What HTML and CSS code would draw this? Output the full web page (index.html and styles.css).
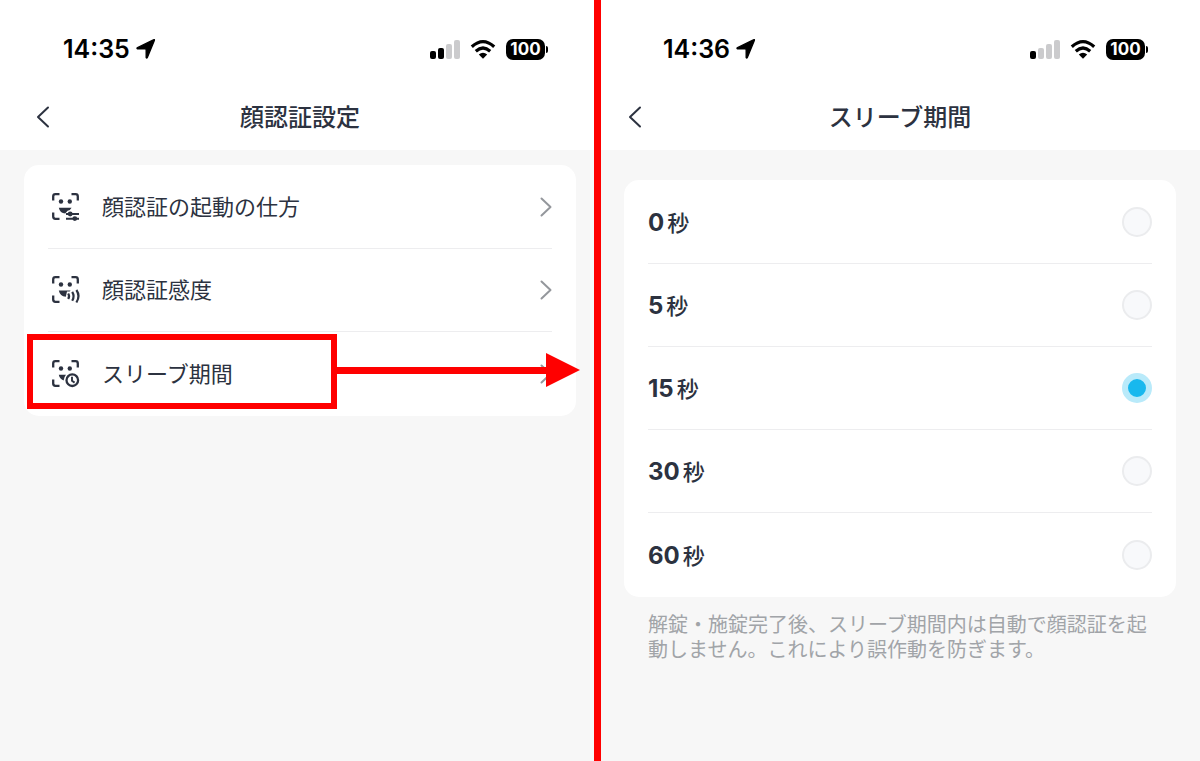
FILE: index.html
```html
<!DOCTYPE html>
<html lang="ja">
<head>
    <meta charset="UTF-8">
    <meta name="viewport" content="width=device-width, initial-scale=1.0">
    <title>顔認証設定</title>
    <link rel="stylesheet" href="styles.css">
</head>
<body>

    <!-- Shared icons -->
    <svg class="sprite" aria-hidden="true">
        <symbol id="location" viewBox="0 0 20 20">
            <path d="M18.3 1.4 L11.3 18.4 Q10.7 19.6 10.2 18.4 V10.6 Q10 10 9.4 9.8 H1.6 Q.4 9.3 1.6 8.7 L17.4 .9 Q18.7 .2 18.3 1.4Z" stroke="#000" stroke-width="1.4" stroke-linejoin="round"/>
        </symbol>
        <symbol id="wifi" viewBox="0 0 26 19">
            <path d="M1.8 6.8 Q13 -3.4 24.2 6.8 M5.8 11.2 Q13 4.8 20.2 11.2" fill="none" stroke="#000" stroke-width="3.2"/>
            <path d="M13 18.8 L8.8 14.6 Q13 11 17.2 14.6Z"/>
        </symbol>
        <symbol id="back" viewBox="0 0 14 22">
            <path d="M12 1.5 L2 11 L12 20.5" fill="none" stroke="#2c3240" stroke-width="2" stroke-linecap="round" stroke-linejoin="round"/>
        </symbol>
        <symbol id="next" viewBox="0 0 12 20">
            <path d="M1.5 1.5 L10.5 10 L1.5 18.5" fill="none" stroke="#94979c" stroke-width="2" stroke-linecap="round" stroke-linejoin="round"/>
        </symbol>
        <symbol id="face" viewBox="0 0 28 28">
            <path d="M1.2 7.5 V3.4 Q1.2 1.2 3.4 1.2 H7.5 M19.5 1.2 H23.6 Q25.8 1.2 25.8 3.4 V7.5 M1.2 19.5 V23.6 Q1.2 25.8 3.4 25.8 H7.5" fill="none" stroke="#2c3240" stroke-width="2.3"/>
            <circle cx="9" cy="8.5" r="2.2"/>
            <circle cx="17.8" cy="8.5" r="2.2"/>
        </symbol>
    </svg>

    <main class="screens">
        <section class="screen">
            <header class="header">
                <div class="status">
                    <span class="time">14:35</span>
                    <svg class="location"><use href="#location"/></svg>
                    <div class="indicators">
                        <div class="signal">
                            <i class="on"></i><i class="on"></i><i></i><i></i>
                        </div>
                        <svg class="wifi"><use href="#wifi"/></svg>
                        <div class="battery">100</div>
                    </div>
                </div>
                <div class="nav">
                    <button class="back" aria-label="戻る"><svg><use href="#back"/></svg></button>
                    <h1>顔認証設定</h1>
                </div>
            </header>

            <nav class="card">
                <a class="row" href="#">
                    <svg class="icon" viewBox="0 0 28 28">
                        <use href="#face"/>
                        <path d="M6.8 14.8 H19.6 Q18.4 17.4 15.6 17.8 L13.2 20.6 Q8 20.2 6.8 14.8Z"/>
                        <path d="M14 21 H27 M14 25.8 H27" stroke="#2c3240" stroke-width="2"/>
                        <circle cx="18.2" cy="21" r="2.4"/>
                        <circle cx="22.8" cy="25.6" r="2.4"/>
                    </svg>
                    <span>顔認証の起動の仕方</span>
                    <svg class="next"><use href="#next"/></svg>
                </a>
                <a class="row" href="#">
                    <svg class="icon" viewBox="0 0 28 28">
                        <use href="#face"/>
                        <path d="M6.8 14.6 H18.6 L17.6 15.6 H15 L13.8 20.8 Q8 20.4 6.8 14.6Z"/>
                        <path d="M16.2 17.5 Q18 20.2 16.2 23 M20.2 15.8 Q23 20.2 20.2 24.8 M24.4 14 Q28.6 20 24.4 26.5" fill="none" stroke="#2c3240" stroke-width="2.2"/>
                    </svg>
                    <span>顔認証感度</span>
                    <svg class="next"><use href="#next"/></svg>
                </a>
                <a class="row marked" href="#">
                    <svg class="icon" viewBox="0 0 28 28">
                        <use href="#face"/>
                        <path d="M6.8 14.8 H14 Q12 17 11.6 20.6 Q7.6 19 6.8 14.8Z"/>
                        <circle cx="20.3" cy="20.2" r="5.8" fill="none" stroke="#2c3240" stroke-width="2.3"/>
                        <path d="M20 16.8 V20.8 L22.6 22.6" fill="none" stroke="#2c3240" stroke-width="1.9"/>
                    </svg>
                    <span>スリーブ期間</span>
                    <svg class="next"><use href="#next"/></svg>
                    <i class="highlight"></i>
                    <i class="arrow"></i>
                </a>
            </nav>
        </section>

        <section class="screen period">
            <header class="header">
                <div class="status">
                    <span class="time">14:36</span>
                    <svg class="location"><use href="#location"/></svg>
                    <div class="indicators">
                        <div class="signal">
                            <i class="on"></i><i></i><i></i><i></i>
                        </div>
                        <svg class="wifi"><use href="#wifi"/></svg>
                        <div class="battery">100</div>
                    </div>
                </div>
                <div class="nav">
                    <button class="back" aria-label="戻る"><svg><use href="#back"/></svg></button>
                    <h1>スリーブ期間</h1>
                </div>
            </header>

            <form class="card">
                <label class="row option"><span><b>0</b>秒</span><input type="radio" name="period" value="0"></label>
                <label class="row option"><span><b>5</b>秒</span><input type="radio" name="period" value="5"></label>
                <label class="row option"><span><b>15</b>秒</span><input type="radio" name="period" value="15" checked></label>
                <label class="row option"><span><b>30</b>秒</span><input type="radio" name="period" value="30"></label>
                <label class="row option"><span><b>60</b>秒</span><input type="radio" name="period" value="60"></label>
            </form>
            <p class="note">解錠・施錠完了後、スリーブ期間内は自動で顔認証を起動しません。これにより誤作動を防ぎます。</p>
        </section>
    </main>

</body>
</html>
```
FILE: styles.css
```css
* {
    box-sizing: border-box;
}
body {
    margin: 0;
    font-family: Inter, "Noto Sans CJK JP", sans-serif;
    color: #2c3240;
    background-color: #f7f7f7;
}
.sprite {
    display: none;
}
.screens {
    position: relative;
    display: grid;
    grid-template-columns: 1fr 1fr;
    min-height: 100vh;
}
/* Red line between the two screens */
.screens::after {
    content: "";
    position: absolute;
    top: 0;
    bottom: 0;
    left: calc(50% - 6px);
    width: 7px;
    background-color: #ff0000;
}
.header {
    height: 150px;
    background-color: #fff;
}

/* Status bar */
.status {
    display: flex;
    align-items: center;
    height: 84px;
    padding: 14px 55px 0 63px;
    color: #000;
}
.time {
    font-size: 25px;
    font-weight: 600;
    line-height: 30px;
}
.location {
    width: 20px;
    height: 20px;
    margin-left: 6px;
}
.indicators {
    display: flex;
    align-items: center;
    gap: 10px;
    margin-left: auto;
}
.signal {
    display: flex;
    align-items: flex-end;
    gap: 2px;
}
.signal i {
    width: 6px;
    height: 8px;
    border-radius: 2px;
    background-color: #cbcbcd;
}
.signal i:nth-child(2) {
    height: 11px;
}
.signal i:nth-child(3) {
    height: 15px;
}
.signal i:nth-child(4) {
    height: 19px;
}
.signal .on {
    background-color: #000;
}
.wifi {
    width: 26px;
    height: 19px;
}
.battery {
    position: relative;
    width: 39px;
    border-radius: 7px;
    background-color: #000;
    color: #fff;
    font-size: 17px;
    font-weight: 700;
    line-height: 21px;
    text-align: center;
}
.battery::after {
    content: "";
    position: absolute;
    top: 7px;
    right: -3px;
    width: 2px;
    height: 7px;
    border-radius: 0 3px 3px 0;
    background-color: #000;
}

/* Title bar */
.nav {
    display: grid;
    grid-template-columns: 60px 1fr 60px;
    align-items: center;
    height: 66px;
}
.back {
    display: flex;
    padding: 0 0 0 36px;
    border: none;
    background: none;
    cursor: pointer;
}
.period .back {
    padding-left: 28px;
}
.back svg {
    width: 14px;
    height: 22px;
}
h1 {
    margin: 0;
    padding-top: 2px;
    font-size: 24px;
    font-weight: 500;
    line-height: 36px;
    text-align: center;
}

/* Lists */
.card {
    margin: 15px 24px 0;
    padding: 1px 24px;
    border-radius: 15px;
    background-color: #fff;
}
.period .card {
    margin-top: 30px;
}
.row {
    display: flex;
    align-items: center;
    height: 83px;
    border-bottom: 1px solid #ededef;
    color: inherit;
    font-size: 22px;
    text-decoration: none;
    cursor: pointer;
}
.row:last-child {
    border-bottom: none;
}
.row span {
    padding-bottom: 4px;
}
.icon {
    width: 28px;
    height: 28px;
    margin: 0 22px 0 4px;
    fill: #2c3240;
    overflow: visible;
}
.next {
    width: 12px;
    height: 20px;
    margin-left: auto;
}
.marked {
    position: relative;
}
.highlight {
    position: absolute;
    top: 2px;
    left: -21px;
    width: 310px;
    height: 75px;
    border: 6px solid #ff0000;
}
.arrow {
    position: absolute;
    top: 35px;
    left: 289px;
    right: 6px;
    height: 7px;
    background-color: #ff0000;
}
.arrow::after {
    content: "";
    position: absolute;
    top: -14px;
    right: -34px;
    border: 17px solid transparent;
    border-left: 34px solid #ff0000;
    border-right: none;
}

/* Sleep period options */
.option {
    justify-content: space-between;
    font-weight: 500;
}
.option span {
    padding-bottom: 2px;
}
.option b {
    margin-right: 3px;
    font-size: 24px;
    font-weight: 700;
}
.option input {
    appearance: none;
    width: 30px;
    height: 30px;
    margin: 0;
    border: 2px solid #ebecee;
    border-radius: 50%;
    background-color: #f8f9fb;
    cursor: pointer;
}
.option input:checked {
    border: 6px solid #b9eafa;
    background-color: #18b8ee;
}
.note {
    margin: 16px 48px 0;
    color: #a1a4a8;
    font-size: 20px;
    line-height: 25px;
}
```
